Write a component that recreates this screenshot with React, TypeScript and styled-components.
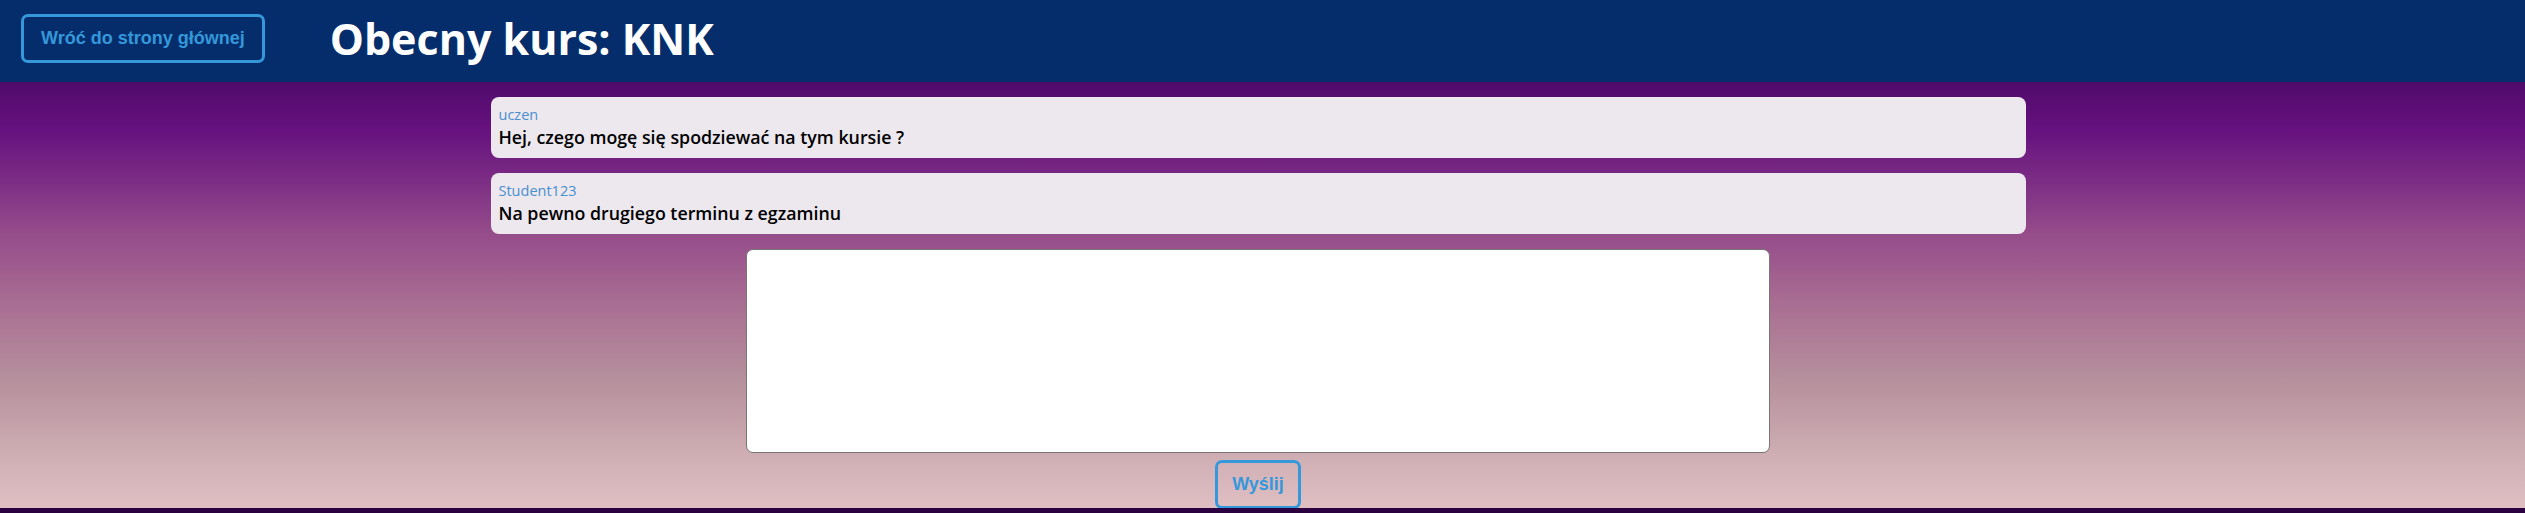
import React from "react";
import styled, { createGlobalStyle } from "styled-components";

const Global = createGlobalStyle`
  html, body {
    margin: 0;
    padding: 0;
    background: #2a0041;
  }
  body {
    font-family: "Open Sans", "Liberation Sans", sans-serif;
  }
  * { box-sizing: border-box; }
`;

const Page = styled.div`
  display: flex;
  flex-direction: column;
`;

const Header = styled.header`
  height: 82px;
  background: #052d6b;
  display: flex;
  align-items: center;
  gap: 65px;
  padding: 0 0 5px 21px;
`;

const OutlineButton = styled.button<{ $padX: number }>`
  font-family: "Liberation Sans", Arial, sans-serif;
  font-weight: bold;
  font-size: 18px;
  line-height: 21px;
  color: #3498db;
  background: transparent;
  border: 3px solid #3498db;
  border-radius: 7px;
  padding: 11px ${(p) => p.$padX}px;
  cursor: pointer;
`;

const Title = styled.h1`
  margin: 0;
  color: #ffffff;
  font-family: "Open Sans", sans-serif;
  font-weight: 700;
  font-size: 43px;
  line-height: 1;
`;

const Main = styled.main`
  height: 426px;
  background: linear-gradient(
    to bottom,
    #500b6a 0px,
    #66117f 48px,
    #772783 88px,
    #944a8a 148px,
    #a86c92 218px,
    #b6909c 298px,
    #d0b0b5 378px,
    #e0bfc3 426px
  );
  padding: 15px 9px 0 0;
  display: flex;
  flex-direction: column;
  align-items: center;
`;

const Feed = styled.section`
  width: 1535px;
  display: flex;
  flex-direction: column;
  gap: 15px;
`;

const Card = styled.article`
  height: 61px;
  background: #ece8ee;
  border-radius: 8px;
  padding: 8px 8px 3px;
  display: flex;
  flex-direction: column;
`;

const Author = styled.div`
  font-family: "Open Sans", sans-serif;
  font-size: 14.5px;
  line-height: 20px;
  color: #4a8fd0;
`;

const Text = styled.div`
  font-family: "Open Sans", sans-serif;
  font-weight: 600;
  font-size: 17.8px;
  line-height: 25px;
  color: #000;
`;

const Composer = styled.form`
  margin-top: 15px;
  display: flex;
  flex-direction: column;
  align-items: center;
  gap: 7px;
`;

const TextArea = styled.textarea`
  width: 1024px;
  height: 204px;
  border: 1px solid #767676;
  border-radius: 7px;
  background: #fff;
  resize: none;
  display: block;
  font-family: "Open Sans", sans-serif;
`;

const messages = [
  { author: "uczen", text: "Hej, czego mogę się spodziewać na tym kursie ?" },
  { author: "Student123", text: "Na pewno drugiego terminu z egzaminu" },
];

export default function App() {
  return (
    <Page>
      <Global />
      <Header>
        <OutlineButton $padX={17}>Wróć do strony głównej</OutlineButton>
        <Title>Obecny kurs: KNK</Title>
      </Header>
      <Main>
        <Feed>
          {messages.map((m, i) => (
            <Card key={i}>
              <Author>{m.author}</Author>
              <Text>{m.text}</Text>
            </Card>
          ))}
        </Feed>
        <Composer onSubmit={(e) => e.preventDefault()}>
          <TextArea />
          <OutlineButton type="submit" $padX={14}>Wyślij</OutlineButton>
        </Composer>
      </Main>
    </Page>
  );
}
